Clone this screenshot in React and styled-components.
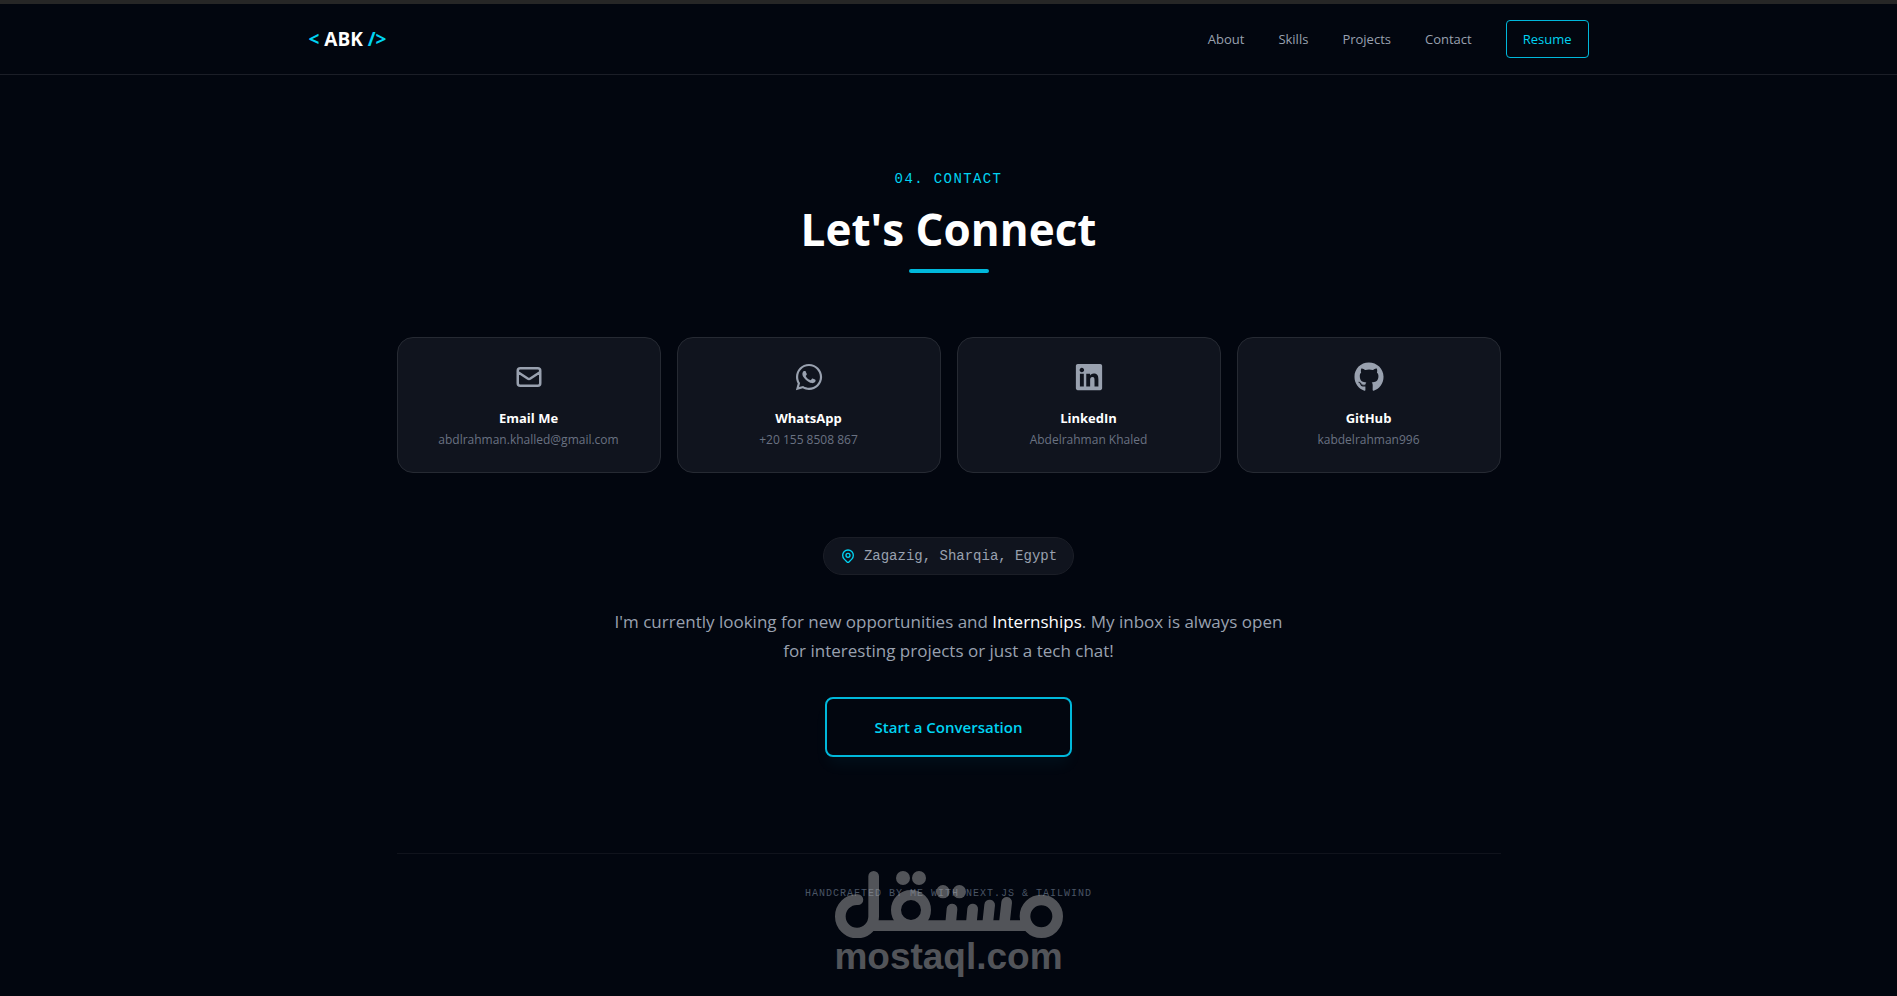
import React from 'react'
import styled, { createGlobalStyle } from 'styled-components'
import { HiOutlineLocationMarker, HiOutlineMail } from 'react-icons/hi'
import { FaWhatsapp, FaLinkedin, FaGithub } from 'react-icons/fa'

const colors = {
  bg: '#02060f',
  accent: '#00b8db',
  accentLight: '#00d3f2',
  white: '#ffffff',
  gray4: '#99a1af',
  gray5: '#6a7282',
  gray6: '#4a5565',
  surface: '#10141e',
  line: '#262a33'
}

const fonts = {
  sans: "'Open Sans', 'Noto Sans', sans-serif",
  mono: "'Liberation Mono', monospace"
}

const NAV_WIDTH = 1280
const SECTION_WIDTH = 1104

const GlobalStyle = createGlobalStyle`
  *, *::before, *::after {
    box-sizing: border-box;
  }

  html {
    background: ${colors.bg};
  }

  body {
    margin: 0;
    background: ${colors.bg};
    color: ${colors.white};
    font-family: ${fonts.sans};
    font-size: 16px;
    line-height: 24px;
  }

  h1, h2, h3, p {
    margin: 0;
  }

  a {
    color: inherit;
    text-decoration: none;
  }
`

const Page = styled.div`
  min-height: 100vh;
`

const Header = styled.header`
  border-top: 4px solid #262626;
  border-bottom: 1px solid #1b1e27;
`

const Nav = styled.nav`
  display: flex;
  align-items: center;
  justify-content: space-between;
  max-width: ${NAV_WIDTH}px;
  margin: 0 auto;
  padding: 16px 0;
`

const Logo = styled.a`
  font-size: 19px;
  line-height: 28px;
  font-weight: 700;
`

const Accent = styled.span`
  color: ${colors.accentLight};
`

const NavLinks = styled.div`
  display: flex;
  align-items: center;
  gap: 34px;
  font-size: 13px;
  line-height: 20px;
  color: ${colors.gray4};
`

const NavLink = styled.a`
  &:hover {
    color: ${colors.accentLight};
  }
`

const ResumeLink = styled.a`
  padding: 8px 16px;
  border: 1px solid ${colors.accent};
  border-radius: 4px;
  color: ${colors.accentLight};
`

const Section = styled.main`
  display: flex;
  flex-direction: column;
  align-items: center;
  max-width: ${SECTION_WIDTH}px;
  margin: 0 auto;
  padding-top: 94px;
`

const Eyebrow = styled.p`
  font-family: ${fonts.mono};
  font-size: 14px;
  line-height: 20px;
  letter-spacing: 0.1em;
  text-transform: uppercase;
  color: ${colors.accentLight};
`

const Title = styled.h2`
  margin-top: 16px;
  font-size: 44px;
  line-height: 48px;
  font-weight: 700;
`

const Underline = styled.div`
  width: 80px;
  height: 4px;
  margin-top: 16px;
  border-radius: 4px;
  background: ${colors.accent};
`

const Cards = styled.div`
  display: grid;
  grid-template-columns: repeat(4, 1fr);
  gap: 16px;
  width: 100%;
  margin-top: 64px;
`

const Card = styled.a`
  display: flex;
  flex-direction: column;
  align-items: center;
  padding: 24px;
  border: 1px solid ${colors.line};
  border-radius: 16px;
  background: ${colors.surface};
  color: ${colors.gray4};

  &:hover {
    border-color: ${colors.accent};
  }
`

const CardTitle = styled.h3`
  margin-top: 16px;
  font-size: 13px;
  line-height: 20px;
  font-weight: 700;
  color: ${colors.white};
`

const CardText = styled.p`
  margin-top: 4px;
  font-size: 12px;
  line-height: 16px;
  color: ${colors.gray5};
`

const Location = styled.div`
  display: flex;
  align-items: center;
  gap: 8px;
  margin-top: 64px;
  padding: 8px 16px;
  border: 1px solid #1b1e27;
  border-radius: 20px;
  background: ${colors.surface};
  font-family: ${fonts.mono};
  font-size: 14px;
  line-height: 20px;
  color: ${colors.gray4};

  svg {
    color: ${colors.accentLight};
  }
`

const Message = styled.p`
  max-width: 688px;
  margin-top: 32px;
  font-size: 17px;
  line-height: 29px;
  text-align: center;
  color: ${colors.gray4};
`

const Highlight = styled.span`
  font-weight: 500;
  color: ${colors.white};
`

const StartButton = styled.button`
  margin-top: 32px;
  padding: 16px 48px;
  border: 2px solid ${colors.accent};
  border-radius: 8px;
  background: ${colors.bg};
  box-shadow: 0 10px 15px -3px rgba(0, 184, 219, 0.06);
  font-family: inherit;
  font-size: 15px;
  line-height: 24px;
  font-weight: 600;
  color: ${colors.accentLight};
  cursor: pointer;
`

const Footer = styled.footer`
  position: relative;
  width: 100%;
  margin-top: 96px;
  padding: 32px 0 80px;
  border-top: 1px solid #10131c;
  text-align: center;
`

const FooterText = styled.p`
  font-family: ${fonts.mono};
  font-size: 10px;
  line-height: 15px;
  letter-spacing: 0.1em;
  text-transform: uppercase;
  color: ${colors.gray6};
`

// sits over the footer line, never catches clicks
const Watermark = styled.div`
  position: absolute;
  top: 17px;
  left: 0;
  right: 0;
  display: flex;
  flex-direction: column;
  align-items: center;
  color: rgb(170, 170, 170);
  opacity: 0.48;
  pointer-events: none;

  svg {
    display: block;
  }
`

const WatermarkText = styled.span`
  font-family: 'Liberation Sans', Arial, sans-serif;
  font-size: 37px;
  line-height: 37px;
  font-weight: 700;
`

const MostaqlMark = () => (
  <svg
    width='228'
    height='67'
    viewBox='162 93 684 201'
    fill='none'
    stroke='currentColor'
    strokeWidth='32'
    strokeLinecap='round'
    role='img'
    aria-label='mostaql'
  >
    <path d='M278 109V228A50 50 0 1 1 228 179Q234 179 227 179' />
    <path d='M270 257H750' strokeLinecap='butt' />
    <circle cx='390' cy='210' r='45' strokeWidth='30' />
    <path d='M513 207L509 250M575 207L571 250M626 195L620 250M677 187L670 250' />
    <circle cx='781' cy='229' r='49' />
    <g fill='currentColor' stroke='none'>
      <circle cx='366' cy='114' r='21' />
      <circle cx='414' cy='114' r='21' />
      <circle cx='486' cy='155' r='20' />
      <circle cx='535' cy='155' r='20' />
    </g>
  </svg>
)

const links = ['About', 'Skills', 'Projects', 'Contact']

const contacts = [
  {
    icon: HiOutlineMail,
    title: 'Email Me',
    text: 'abdlrahman.khalled@gmail.com',
    href: 'mailto:abdlrahman.khalled@gmail.com'
  },
  {
    icon: FaWhatsapp,
    title: 'WhatsApp',
    text: '+20 155 8508 867',
    href: '#whatsapp'
  },
  {
    icon: FaLinkedin,
    title: 'LinkedIn',
    text: 'Abdelrahman Khaled',
    href: '#linkedin'
  },
  {
    icon: FaGithub,
    title: 'GitHub',
    text: 'kabdelrahman996',
    href: '#github'
  }
]

const App = () => (
  <Page>
    <GlobalStyle />
    <Header>
      <Nav>
        <Logo href='#home'>
          <Accent>&lt;</Accent> ABK <Accent>/&gt;</Accent>
        </Logo>
        <NavLinks>
          {links.map(label => (
            <NavLink key={label} href={`#${label.toLowerCase()}`}>
              {label}
            </NavLink>
          ))}
          <ResumeLink href='#resume'>Resume</ResumeLink>
        </NavLinks>
      </Nav>
    </Header>
    <Section id='contact'>
      <Eyebrow>04. Contact</Eyebrow>
      <Title>Let's Connect</Title>
      <Underline />
      <Cards>
        {contacts.map(({ icon: Icon, title, text, href }) => (
          <Card key={title} href={href}>
            <Icon size={30} />
            <CardTitle>{title}</CardTitle>
            <CardText>{text}</CardText>
          </Card>
        ))}
      </Cards>
      <Location>
        <HiOutlineLocationMarker size={16} />
        <span>Zagazig, Sharqia, Egypt</span>
      </Location>
      <Message>
        I'm currently looking for new opportunities and{' '}
        <Highlight>Internships</Highlight>. My inbox is always open for
        interesting projects or just a tech chat!
      </Message>
      <StartButton type='button'>Start a Conversation</StartButton>
      <Footer>
        <FooterText>Handcrafted by me with Next.js &amp; Tailwind</FooterText>
        <Watermark>
          <MostaqlMark />
          <WatermarkText>mostaql.com</WatermarkText>
        </Watermark>
      </Footer>
    </Section>
  </Page>
)

export default App
